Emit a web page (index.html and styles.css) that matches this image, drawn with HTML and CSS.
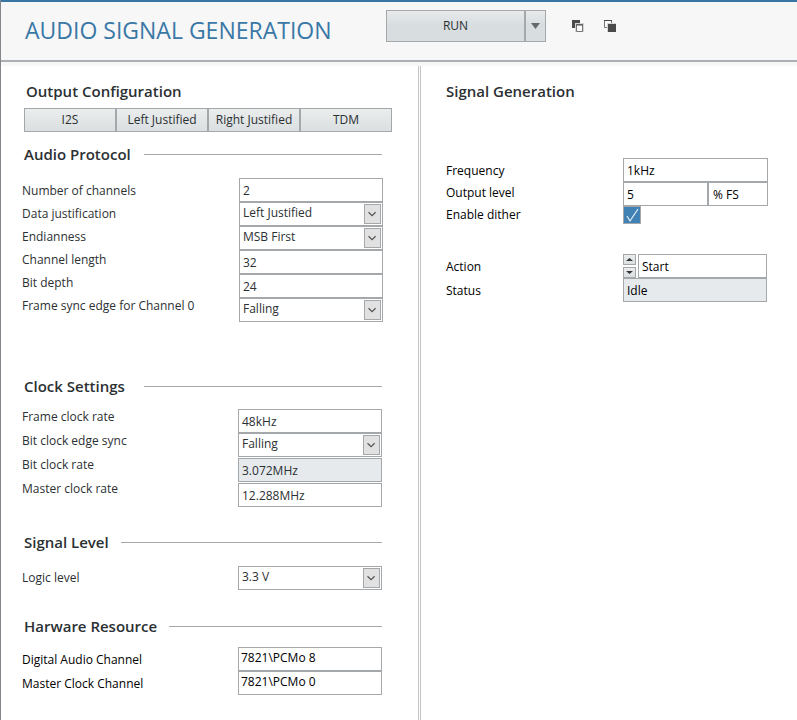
FILE: index.html
```html
<!DOCTYPE html>
<html lang="en">
<head>
<meta charset="utf-8">
<title>Audio Signal Generation</title>
<link rel="stylesheet" href="styles.css">
</head>
<body>
<div class="app">
  <header class="header">
    <h1 class="app-title">AUDIO SIGNAL GENERATION</h1>
    <div class="run">
      <button class="btn run-main" type="button">RUN</button>
      <button class="btn run-more" type="button" aria-label="Run options">
        <svg width="9" height="6" viewBox="0 0 9 6"><path d="M0 0h9L4.5 6z" fill="#66696c"/></svg>
      </button>
    </div>
    <div class="tools">
      <button class="tool" type="button" aria-label="Bring to front">
        <svg width="12" height="12" viewBox="0 0 12 12"><path d="M0 0h8v8H0z" fill="#4a4a4a"/><path d="M3 3h9v9H3z" fill="#d4d4d4"/><path d="M4.5 4.5h6v7h-6z" fill="#fafafa" stroke="#777"/><path d="M4 5h7" stroke="#4a4a4a"/></svg>
      </button>
      <button class="tool" type="button" aria-label="Send to back">
        <svg width="12" height="12" viewBox="0 0 12 12"><path d="M.5.5h7v7h-7z" fill="#fafafa" stroke="#777"/><path d="M0 .5h8" stroke="#4a4a4a"/><path d="M3 3h9v9H3z" fill="#d4d4d4"/><path d="M4 4h8v8H4z" fill="#4a4a4a"/></svg>
      </button>
    </div>
  </header>

  <main class="main">
    <section class="panel settings">
      <h2 class="heading">Output Configuration</h2>
      <div class="presets">
        <button class="btn" type="button">I2S</button>
        <button class="btn" type="button">Left Justified</button>
        <button class="btn" type="button">Right Justified</button>
        <button class="btn" type="button">TDM</button>
      </div>

      <section class="group protocol">
        <h2 class="heading ruled even">Audio Protocol</h2>
        <div class="form">
          <div class="labels compact">
            <label for="channels">Number of channels</label>
            <label for="justification">Data justification</label>
            <label for="endianness">Endianness</label>
            <label for="length">Channel length</label>
            <label for="depth">Bit depth</label>
            <label for="frame-sync">Frame sync edge for Channel 0</label>
          </div>
          <div class="fields">
            <input class="field" id="channels" type="text" value="2">
            <div class="select"><select class="field" id="justification"><option>Left Justified</option></select><svg class="drop" viewBox="0 0 17 20"><path d="M4 8l4 4 4-4"/></svg></div>
            <div class="select"><select class="field" id="endianness"><option>MSB First</option></select><svg class="drop" viewBox="0 0 17 20"><path d="M4 8l4 4 4-4"/></svg></div>
            <input class="field" id="length" type="text" value="32">
            <input class="field" id="depth" type="text" value="24">
            <div class="select"><select class="field" id="frame-sync"><option>Falling</option></select><svg class="drop" viewBox="0 0 17 20"><path d="M4 8l4 4 4-4"/></svg></div>
          </div>
        </div>
      </section>

      <section class="group clock">
        <h2 class="heading ruled even">Clock Settings</h2>
        <div class="form">
          <div class="labels">
            <label for="frame-rate">Frame clock rate</label>
            <label for="bit-sync">Bit clock edge sync</label>
            <label for="bit-rate">Bit clock rate</label>
            <label for="master-rate">Master clock rate</label>
          </div>
          <div class="fields">
            <input class="field" id="frame-rate" type="text" value="48kHz">
            <div class="select"><select class="field" id="bit-sync"><option>Falling</option></select><svg class="drop" viewBox="0 0 17 20"><path d="M4 8l4 4 4-4"/></svg></div>
            <input class="field spaced" id="bit-rate" type="text" value="3.072MHz" readonly>
            <input class="field spaced" id="master-rate" type="text" value="12.288MHz">
          </div>
        </div>
      </section>

      <section class="group level">
        <h2 class="heading ruled">Signal Level</h2>
        <div class="form">
          <div class="labels">
            <label for="logic">Logic level</label>
          </div>
          <div class="fields">
            <div class="select"><select class="field" id="logic"><option>3.3 V</option></select><svg class="drop" viewBox="0 0 17 20"><path d="M4 8l4 4 4-4"/></svg></div>
          </div>
        </div>
      </section>

      <section class="group hardware">
        <h2 class="heading ruled">Harware Resource</h2>
        <div class="form strong">
          <div class="labels">
            <label for="audio-channel">Digital Audio Channel</label>
            <label for="clock-channel">Master Clock Channel</label>
          </div>
          <div class="fields">
            <input class="field raised" id="audio-channel" type="text" value="7821\PCMo 8">
            <input class="field raised" id="clock-channel" type="text" value="7821\PCMo 0">
          </div>
        </div>
      </section>
    </section>

    <section class="panel generation">
      <h2 class="heading">Signal Generation</h2>
      <div class="form strong output">
        <div class="labels tight">
          <label for="frequency">Frequency</label>
          <label for="level">Output level</label>
          <label for="dither">Enable dither</label>
        </div>
        <div class="fields">
          <input class="field" id="frequency" type="text" value="1kHz">
          <div class="split">
            <input class="field" id="level" type="text" value="5">
            <input class="field unit" type="text" value="% FS" aria-label="Output level unit">
          </div>
          <div class="check">
            <input id="dither" type="checkbox" checked>
            <svg class="tick" viewBox="0 0 18 18"><path d="M4 10l3 5 8-12"/></svg>
          </div>
        </div>
      </div>
      <div class="form strong action">
        <div class="labels">
          <label for="action">Action</label>
          <label for="status">Status</label>
        </div>
        <div class="fields">
          <div class="stepper">
            <div class="steps">
              <button class="btn step" type="button" aria-label="Previous action"><svg width="7" height="3" viewBox="0 0 7 3"><path d="M0 3h7L3.5 0z" fill="#333"/></svg></button>
              <button class="btn step" type="button" aria-label="Next action"><svg width="7" height="3" viewBox="0 0 7 3"><path d="M0 0h7L3.5 3z" fill="#333"/></svg></button>
            </div>
            <input class="field" id="action" type="text" value="Start">
          </div>
          <input class="field" id="status" type="text" value="Idle" readonly>
        </div>
      </div>
    </section>
  </main>
</div>
</body>
</html>
```
FILE: styles.css
```css
* {
  box-sizing: border-box;
}

body {
  margin: 0;
  background: #fff;
  color: #2b3033;
  font: 12px/24px "Segoe UI", "Open Sans", "Noto Sans", sans-serif;
}

button,
input,
select {
  margin: 0;
  color: inherit;
  font: inherit;
}

svg {
  display: block;
}

.app {
  display: flex;
  flex-direction: column;
  min-height: 100vh;
  border-left: 1px solid #83878b;
}

.header {
  display: flex;
  align-items: flex-start;
  height: 62px;
  padding: 8px 24px 0;
  border-top: 2px solid #3a76a3;
  border-bottom: 2px solid #abaeb2;
  background: #f7f7f7;
}

.app-title {
  flex: 0 0 361px;
  margin: 0;
  padding-top: 4px;
  color: #3a78a6;
  font-size: 23px;
  font-weight: 400;
  line-height: 32px;
  white-space: nowrap;
}

.btn {
  display: flex;
  align-items: center;
  justify-content: center;
  padding: 0;
  border: 1px solid #a5a8ab;
  border-radius: 0;
  background: linear-gradient(#ebeded, #dadfe1);
  line-height: 20px;
  white-space: nowrap;
}

.run {
  display: flex;
  height: 32px;
}

.run-main,
.run-more {
  background: linear-gradient(#e8eaeb, #d8dee0 45%);
}

.run-main {
  width: 139px;
}

.run-more {
  width: 21px;
}

.tools {
  display: flex;
  gap: 20px;
  padding: 10px 0 0 26px;
}

.tool {
  padding: 0;
  border: 0;
  background: none;
}

.main {
  display: flex;
  flex: 1;
  border-top: 4px solid #f7f7f7;
}

.panel {
  padding-top: 13px;
}

.settings {
  flex: 0 0 420px;
  padding-left: 23px;
  padding-right: 36px;
  border-right: 3px double #c4c4c4;
}

.generation {
  flex: 1;
  padding-left: 25px;
  padding-right: 29px;
}

.heading {
  margin: 0;
  font-size: 15px;
  font-weight: 600;
  line-height: 24px;
}

.settings > .heading {
  padding-left: 2px;
}

.ruled {
  display: flex;
  align-items: center;
  gap: 12px;
  margin-bottom: 12px;
}

.ruled::after {
  content: "";
  flex: 1;
  border-top: 1px solid #a5a8ab;
}

.even {
  display: grid;
  grid-template-columns: 108px 1fr;
}

.presets {
  display: grid;
  grid-template-columns: repeat(4, 1fr);
  height: 24px;
  margin: 5px -10px 10px 0;
}

.group {
  margin-bottom: 24px;
}

.protocol {
  margin-bottom: 52px;
}

.clock {
  margin-bottom: 23px;
}

.form {
  display: flex;
  justify-content: space-between;
}

.settings .form {
  margin-left: -2px;
}

.strong {
  color: #000;
}

.labels {
  display: flex;
  flex-direction: column;
  line-height: 24px;
}

.compact {
  padding-top: 1px;
  line-height: 23px;
}

.tight {
  padding-top: 2px;
  line-height: 22px;
}

.fields {
  width: 144px;
}

.protocol .form {
  margin-right: -1px;
}

.clock .ruled {
  margin-bottom: 7px;
}

.clock .fields {
  padding-top: 4px;
}

.hardware .ruled {
  margin-bottom: 9px;
}

.hardware .labels,
.action .labels {
  padding-top: 1px;
}

.field {
  display: block;
  width: 100%;
  min-width: 0;
  height: 24px;
  padding: 0 3px;
  border: 1px solid #a5a8ab;
  border-radius: 0;
  outline: 0;
  background: #fff;
  line-height: 20px;
}

.field:read-only:not(select) {
  background: #e6eaed;
}

.spaced {
  margin-top: 1px;
}

.raised {
  padding: 0 2px 3px;
}

.select,
.check {
  position: relative;
}

select.field {
  appearance: none;
  padding-bottom: 2px;
}

.drop {
  position: absolute;
  top: 2px;
  right: 2px;
  width: 17px;
  height: 20px;
  border: 1px solid #a5a8ab;
  background: #e1e1e1;
  fill: none;
  stroke: #505356;
  stroke-width: 1.3;
  pointer-events: none;
}

.output {
  margin-top: 55px;
}

.output .fields {
  width: 145px;
}

.split {
  display: flex;
}

.split .unit {
  flex: 0 0 60px;
  padding-left: 4px;
}

.check input {
  display: block;
  width: 18px;
  height: 18px;
  appearance: none;
  border: 1px solid #a5a8ab;
  background: #4182b5;
}

.tick {
  position: absolute;
  top: 0;
  left: 0;
  width: 18px;
  height: 18px;
  fill: none;
  stroke: #e8f1f8;
  stroke-width: 1.2;
  pointer-events: none;
}

.action {
  margin: 28px 1px 0 0;
}

.stepper {
  display: flex;
  gap: 2px;
}

.steps {
  display: flex;
  flex: 0 0 13px;
  flex-direction: column;
  justify-content: space-between;
}

.step {
  height: 11px;
}
```
